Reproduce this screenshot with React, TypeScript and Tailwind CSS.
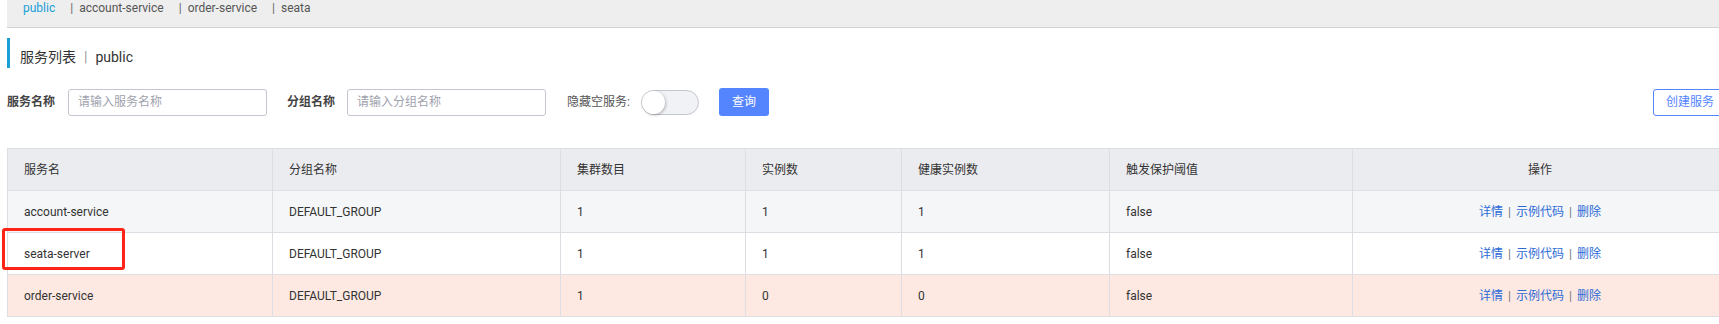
import React from "react";

const font = { fontFamily: 'Roboto, "Noto Sans CJK SC", sans-serif' };

const cols = [
  { w: "w-[265px]", label: "服务名" },
  { w: "w-[288px]", label: "分组名称" },
  { w: "w-[185px]", label: "集群数目" },
  { w: "w-[156px]", label: "实例数" },
  { w: "w-[208px]", label: "健康实例数" },
  { w: "w-[243px]", label: "触发保护阈值" },
  { w: "w-[375px]", label: "操作" },
];

const rows = [
  { name: "account-service", group: "DEFAULT_GROUP", clusters: "1", inst: "1", healthy: "1", threshold: "false", bg: "bg-[#f5f6f8]" },
  { name: "seata-server", group: "DEFAULT_GROUP", clusters: "1", inst: "1", healthy: "1", threshold: "false", bg: "bg-white" },
  { name: "order-service", group: "DEFAULT_GROUP", clusters: "1", inst: "0", healthy: "0", threshold: "false", bg: "bg-[#fde9e2]" },
];

export default function App() {
  return (
    <div className="relative w-[1719px] h-[324px] overflow-hidden bg-white text-[#333]" style={font}>
      <div className="ml-[7px] w-[1720px]">
        {/* top tabs bar */}
        <div className="h-[28px] bg-[#eeeeee] border-b border-[#d2d2d2] flex items-start text-[12px] leading-[16px] text-[#555] pl-[16px]">
          <span className="text-[#1ba0d8]">public</span>
          {["account-service", "order-service", "seata"].map((t) => (
            <span key={t} className="ml-[15px] flex">
              <span className="text-[#666]">|</span>
              <span className="ml-[6px]">{t}</span>
            </span>
          ))}
        </div>

        {/* title */}
        <div className="mt-[10px] h-[30px] border-l-[3px] border-[#1a9fd6] flex items-start pt-[11px] pl-[10px] text-[14px] leading-[16px] text-[#333]">
          <span>服务列表</span>
          <span className="ml-[8px] mr-[8px] text-[#999]">|</span>
          <span>public</span>
        </div>

        {/* form */}
        <div className="mt-[20px] h-[28px] flex items-center text-[12px]">
          <span className="font-bold text-[#444] w-[48px]">服务名称</span>
          <div className="ml-[13px] w-[199px] h-[27px] border border-[#c4c6cf] rounded-[3px] flex items-center px-[9px] text-[#a0a2ad]">
            请输入服务名称
          </div>
          <span className="ml-[20px] font-bold text-[#444] w-[48px]">分组名称</span>
          <div className="ml-[12px] w-[199px] h-[27px] border border-[#c4c6cf] rounded-[3px] flex items-center px-[9px] text-[#a0a2ad]">
            请输入分组名称
          </div>
          <span className="ml-[21px] text-[#555] text-[12px]">隐藏空服务:</span>
          <div className="ml-[11px] w-[58px] h-[25px] rounded-full bg-[#f1f2f6] border border-[#c4c6cf] flex items-center">
            <div className="w-[23px] h-[23px] rounded-full bg-white shadow-[1px_1px_3px_rgba(0,0,0,0.25)]" />
          </div>
          <div className="ml-[20px] w-[50px] h-[28px] rounded-[3px] bg-[#5584ff] text-white flex items-center justify-center">
            查询
          </div>
          <div className="ml-auto w-[74px] h-[27px] rounded-[3px] border border-[#5584ff] text-[#5584ff] flex items-center justify-center">
            创建服务
          </div>
        </div>

        {/* table */}
        <table className="mt-[32px] border-collapse text-[12px] table-fixed w-[1720px]">
          <thead>
            <tr className="bg-[#ebecf0] h-[42px]">
              {cols.map((c, i) => (
                <th
                  key={c.label}
                  className={`${c.w} border border-[#dcdee3] font-normal text-[#333] px-[16px] ${i === 6 ? "text-center" : "text-left"}`}
                >
                  {c.label}
                </th>
              ))}
            </tr>
          </thead>
          <tbody>
            {rows.map((r) => (
              <tr key={r.name} className={`${r.bg} h-[42px]`}>
                <td className="border border-[#dcdee3] px-[16px]">{r.name}</td>
                <td className="border border-[#dcdee3] px-[16px]">{r.group}</td>
                <td className="border border-[#dcdee3] px-[16px]">{r.clusters}</td>
                <td className="border border-[#dcdee3] px-[16px]">{r.inst}</td>
                <td className="border border-[#dcdee3] px-[16px]">{r.healthy}</td>
                <td className="border border-[#dcdee3] px-[16px]">{r.threshold}</td>
                <td className="border border-[#dcdee3] px-[16px] text-center text-[#2c6ad6]">
                  <span>详情</span>
                  <span className="mx-[5px] text-[#777]">|</span>
                  <span>示例代码</span>
                  <span className="mx-[5px] text-[#777]">|</span>
                  <span>删除</span>
                </td>
              </tr>
            ))}
          </tbody>
        </table>
      </div>

      {/* red highlight box */}
      <div className="absolute left-[2px] top-[228px] w-[123px] h-[42px] border-[3px] border-[#ff2418] rounded-[3px]" />
    </div>
  );
}
